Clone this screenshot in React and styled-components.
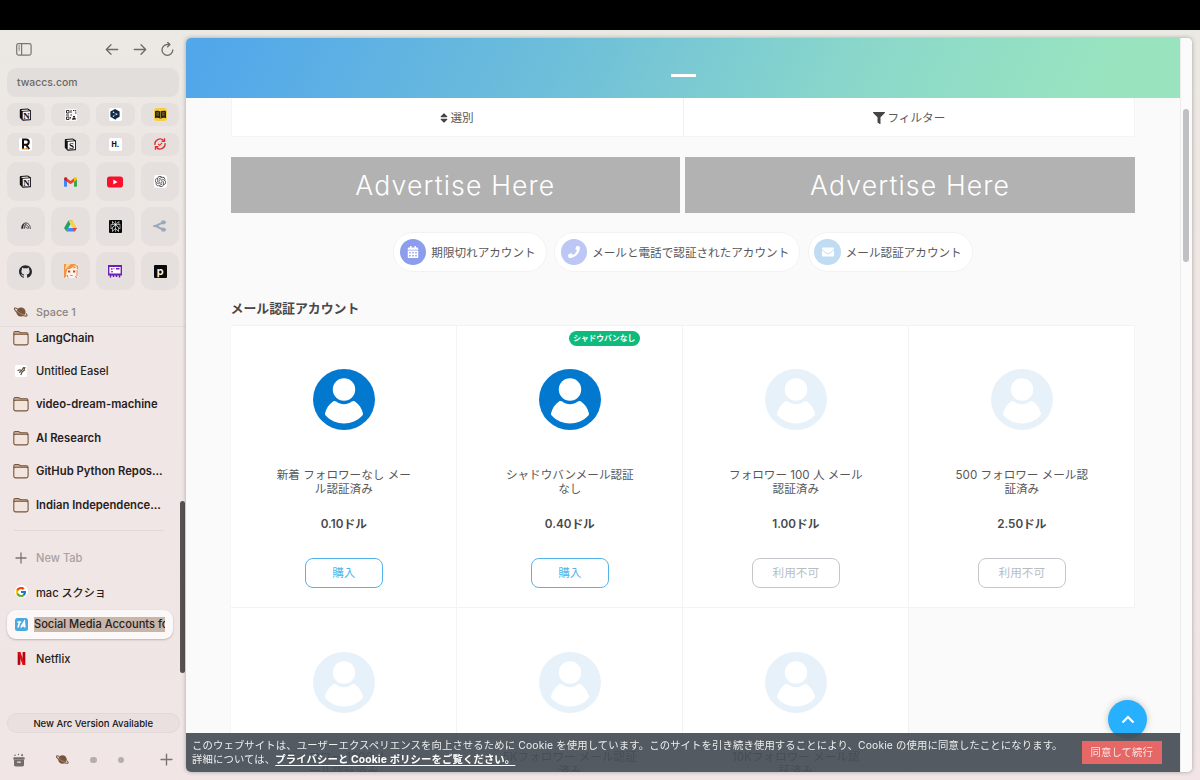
import React from 'react';
import styled, { createGlobalStyle } from 'styled-components';
import { FaSort, FaFilter, FaCalendarAlt, FaPhone, FaEnvelope } from 'react-icons/fa';
import { FcGoogle } from 'react-icons/fc';
import { SiGithub, SiOpenai, SiPerplexity } from 'react-icons/si';

const GlobalStyle = createGlobalStyle`
    * { box-sizing: border-box; }
    body {
        margin: 0;
        overflow: hidden;
        font-family: Inter, "Noto Sans CJK JP", sans-serif;
    }
    svg { display: block; flex: none; }
`

const Screen = styled.div`
    display: flex;
    width: 1200px;
    height: 780px;
    border-top: 30px solid #000;
    background: linear-gradient(180deg, #ebe9e3 0%, #ede7e3 16%, #efe7e5 40%, #f1e5e5 100%);
`

/* sidebar */

const Sidebar = styled.div`
    position: relative;
    display: flex;
    flex-direction: column;
    width: 186px;
    height: 750px;
`

const Toolbar = styled.div`
    display: flex;
    align-items: center;
    height: 37.5px;
    padding: 1px 12px 0 16px;
`

const NavButtons = styled.div`
    display: flex;
    gap: 14px;
    margin-left: auto;
`

const UrlBar = styled.div`
    height: 29.5px;
    margin: 0 7px 6px 6.5px;
    padding-left: 10.5px;
    border-radius: 9px;
    background: #e2dedb;
    color: #6d6865;
    font-size: 10.4px;
    font-weight: 500;
    line-height: 30.5px;
`

const PinGrid = styled.div`
    display: grid;
    grid-template-columns: repeat(4, 38.4px);
    grid-template-rows: 23.3px 23.3px repeat(3, 38.4px);
    gap: 6.4px;
    padding-left: 6.6px;
`

const Pin = styled.div`
    display: flex;
    align-items: center;
    justify-content: center;
    border-radius: ${props => props.$tall ? 10 : 8}px;
    background: #e5e0dd;
`

const Tile = styled.div`
    display: flex;
    align-items: center;
    justify-content: center;
    width: 13px;
    height: 13px;
    border-radius: ${props => props.$radius || 2}px;
    background: ${props => props.$bg || '#fff'};
    color: ${props => props.$color || '#111'};
    font-size: ${props => props.$size || 8}px;
    font-weight: ${props => props.$weight || 800};
    line-height: 13px;
`

const SpaceTitle = styled.div`
    display: flex;
    align-items: center;
    gap: 8px;
    height: 36.5px;
    padding: 8px 0 0 14px;
    border-bottom: 1px solid #e5dddb;
    color: #8b8380;
    font-size: 10.8px;
    font-weight: 500;
`

const TabArea = styled.div`
    overflow: hidden;
    height: 349px;
`

const TabList = styled.div`
    margin-top: -6px;
`

const TabRow = styled.div`
    display: flex;
    align-items: center;
    gap: 7px;
    height: 33.45px;
    padding-left: 14px;
    color: ${props => props.$muted ? '#aaa19f' : '#272120'};
    font-size: ${props => props.$bold ? 11.25 : 11.1}px;
    font-weight: ${props => props.$bold ? 630 : 450};
    white-space: nowrap;
`

const ActiveTab = styled.div`
    display: flex;
    align-items: center;
    gap: 5px;
    height: 29px;
    margin: 2px 13px 2.5px 7px;
    padding-left: 7px;
    border-radius: 9px;
    background: #fbf8f7;
    box-shadow: 0 1px 2px rgba(90, 60, 50, .3);
`

const Selection = styled.span`
    overflow: hidden;
    width: 131px;
    background: #c8b6aa;
    color: #272120;
    font-size: 11.1px;
    font-weight: 450;
    line-height: 15px;
    white-space: nowrap;
`

const IconSlot = styled.span`
    display: flex;
    align-items: center;
    justify-content: center;
    width: 15px;
    margin-right: .5px;
    margin-left: -.5px;
    flex: none;
`

const Separator = styled.div`
    height: 10px;
    margin: 0 22px 10px 14px;
    border-bottom: 1px solid #e2d8d6;
`

const UpdatePill = styled.div`
    height: 20px;
    margin: 37.5px 6px 0 6.5px;
    border: 1px solid #e3d9d8;
    border-radius: 10px;
    background: #eae0df;
    color: #171313;
    font-size: 9.55px;
    font-weight: 550;
    line-height: 19px;
    text-align: center;
`

const SidebarFooter = styled.div`
    display: flex;
    align-items: center;
    justify-content: space-between;
    height: 46px;
    padding: 7px 13px 0 13px;
`

const SpaceDots = styled.div`
    display: flex;
    align-items: center;
    gap: 21px;
    margin-right: 5px;
`

const Dot = styled.div`
    width: 6.5px;
    height: 6.5px;
    border-radius: 50%;
    background: #b7adab;
`

const SidebarThumb = styled.div`
    position: absolute;
    top: 471px;
    right: 1.5px;
    width: 5px;
    height: 172px;
    border-radius: 3px;
    background: #575352;
`

/* page */

const Browser = styled.div`
    position: relative;
    display: flex;
    overflow: hidden;
    width: 1006px;
    height: 734px;
    margin-top: 8px;
    border-radius: 5px;
    background: #fafafa;
`

const Frame = styled.div`
    border-radius: 5px;
    height: 742px;
    filter: drop-shadow(0 0 2px rgba(0, 0, 0, .3));
`

const Page = styled.div`
    width: 993.5px;
    height: 734px;
    overflow: hidden;
`

const Scrollbar = styled.div`
    width: 12.5px;
    padding: 71px 0 0 2px;
    border-left: 1px solid #ececec;
    background: #fbfbfb;
`

const ScrollThumb = styled.div`
    width: 6px;
    height: 153px;
    border-radius: 3px;
    background: #c0c0c2;
`

const Banner = styled.div`
    display: flex;
    justify-content: center;
    height: 60px;
    padding: 36px 0 0 1px;
    background: linear-gradient(115deg, #52a7ea 3%, #6ebfd9 38%, #8bd8ca 68%, #99e4bf 92%);
`

const BannerDash = styled.div`
    width: 25px;
    height: 3px;
    background: #fff;
`

const Content = styled.div`
    width: 904.5px;
    margin: 0 0 0 44.5px;
`

const SortBar = styled.div`
    display: grid;
    grid-template-columns: 1fr 1fr;
    height: 39px;
    border: 1px solid #f4f4f4;
    border-top: 0;
    background: #fff;
`

const SortItem = styled.div`
    display: flex;
    align-items: center;
    justify-content: center;
    gap: ${props => props.$gap}px;
    padding: 2px ${props => props.$divided ? 0 : 3}px 0 0;
    border-left: ${props => props.$divided ? '1px solid #efefef' : '0'};
    color: #58585a;
    font-size: 11.6px;
    line-height: 20px;

    svg { color: #454547; }
`

const Ads = styled.div`
    display: grid;
    grid-template-columns: 1fr 1fr;
    gap: 5px;
    margin-top: 20px;
`

const Ad = styled.div`
    height: 55.5px;
    background: #b2b2b2;
    color: #fff;
    font-size: 26.6px;
    font-weight: 300;
    letter-spacing: 1.15px;
    line-height: 56px;
    text-align: center;
`

const Chips = styled.div`
    display: flex;
    justify-content: center;
    gap: 7.5px;
    margin: 19.5px 0 0 .5px;
`

const Chip = styled.div`
    display: flex;
    align-items: center;
    gap: 5px;
    height: 39.5px;
    padding: 0 10px 0 5.5px;
    border: 1px solid #f2f2f2;
    border-radius: 20px;
    background: #fff;
    color: #58585a;
    font-size: 11.6px;
    white-space: nowrap;
`

const ChipIcon = styled.div`
    display: flex;
    align-items: center;
    justify-content: center;
    width: 26.5px;
    height: 26.5px;
    border-radius: 50%;
    background: ${props => props.$bg};
    color: #fff;
`

const Heading = styled.div`
    height: 20px;
    margin: 27px 0 6px;
    color: #48484b;
    font-size: 12.9px;
    font-weight: 600;
    line-height: 20px;
`

const Products = styled.div`
    display: grid;
    grid-template-columns: repeat(4, 226px);
    grid-auto-rows: 282.5px;
    margin-left: .8px;
    border-top: 1px solid #f3f3f3;
    box-shadow: -1px 0 0 #f6f6f6;
`

const Product = styled.div`
    position: relative;
    display: flex;
    flex-direction: column;
    align-items: center;
    padding-top: 43.5px;
    border-right: 1px solid #f3f3f3;
    border-bottom: 1px solid #f3f3f3;
    background: #fff;
`

const Badge = styled.div`
    position: absolute;
    top: 5px;
    right: 42.5px;
    height: 15px;
    padding: 0 4.7px;
    border-radius: 8px;
    background: #0dbb7c;
    color: #fff;
    font-size: 7.7px;
    font-weight: 700;
    line-height: 15px;
    white-space: nowrap;
`

const ProductName = styled.div`
    height: 28.4px;
    margin-top: 37.5px;
    color: #58585a;
    font-size: 11.6px;
    line-height: 14.2px;
    text-align: center;
    white-space: pre;
`

const Price = styled.div`
    height: 16px;
    margin-top: 20.6px;
    color: #48484b;
    font-size: 11.7px;
    font-weight: 600;
    line-height: 16.6px;
`

const BuyButton = styled.button`
    width: ${props => props.disabled ? 88 : 78}px;
    height: 29.5px;
    margin-top: 26px;
    padding: 1px 0 0;
    border: 1px solid ${props => props.disabled ? '#c3c6ca' : '#53b4ec'};
    border-radius: 8px;
    background: #fff;
    color: ${props => props.disabled ? '#b9bcc1' : '#53b4ec'};
    font-family: inherit;
    font-size: 11.6px;
    line-height: 27px;
`

const ToTop = styled.div`
    position: absolute;
    right: 45px;
    top: 662px;
    display: flex;
    align-items: center;
    justify-content: center;
    width: 39px;
    height: 39px;
    border-radius: 50%;
    background: #27b0fd;
    box-shadow: 0 0 7px rgba(0, 0, 0, .22);
`

const CookieBar = styled.div`
    position: absolute;
    left: 0;
    bottom: 0;
    display: flex;
    align-items: center;
    justify-content: space-between;
    width: 993.5px;
    height: 39px;
    padding: 0 18px 0 6px;
    background: rgba(69, 76, 84, .92);
    color: #eceded;
    font-size: 10.35px;
    letter-spacing: .13px;
    line-height: 13.7px;
    white-space: nowrap;
`

const PolicyLink = styled.a`
    color: #fff;
    font-weight: 700;
    text-decoration: underline;
    text-underline-offset: 2px;
`

const Agree = styled.div`
    width: 79.5px;
    height: 23px;
    background: #e56866;
    color: #fbe3e3;
    line-height: 23px;
    text-align: center;
`

/* icons */

const SidebarIcon = () =>
    <svg width="16" height="13" viewBox="0 0 16 13" fill="none" stroke="#7b7472" strokeWidth="1.2">
        <rect x=".7" y=".7" width="14.4" height="11.4" rx="1.8" />
        <path d="M5.6 .7v11.4M2.5 3.2h1.4M2.5 5.1h1.4M2.5 7h1.4" />
    </svg>

const Arrow = ({flip}) =>
    <svg width="14" height="14" viewBox="0 -1.5 14 14" fill="none" stroke="#6f6967" strokeWidth="1.3" strokeLinecap="round" strokeLinejoin="round">
        <path d={flip ? "M1.3 6h11.4M8 1.3L12.7 6 8 10.7" : "M12.7 6H1.3M6 1.3L1.3 6 6 10.7"} />
    </svg>

const Reload = () =>
    <svg width="13" height="14" viewBox="0 0 13 14" fill="none" stroke="#6f6967" strokeWidth="1.3" strokeLinecap="round" strokeLinejoin="round">
        <path d="M11.8 8a5.4 5.4 0 1 1-5.2-5.5h2M6.6 .3l2.3 2.2-2.3 2.4" />
    </svg>

const NotionCube = ({letter = 'N'}) =>
    <svg width="13" height="13" viewBox="0 0 13 13">
        <path d="M.8 1.9C.8 1.3 1.2 1 1.7 1L8.8.6l3.2 2v8.8c0 .6-.3.9-.9.9l-7.4.4L.8 9.8z" fill="#111" />
        <path d="M2 2l6.5-.5 1.5.9-6.6.5z" fill="#f1efed" />
        <path d="M3.7 3.7l7.4-.4v7.9l-7.4.4z" fill="#f7f5f3" />
        <text x="7.4" y="10.5" textAnchor="middle" fontFamily="Liberation Serif" fontSize="9" fontWeight="700" fill="#111">{letter}</text>
    </svg>

const QrTile = () =>
    <svg width="12" height="12" viewBox="0 0 12 12">
        <rect width="12" height="12" rx="1.5" fill="#faf9f8" />
        <g fill="none" stroke="#333" strokeWidth="1">
            <path d="M1.5 1.5h2.5v2.5H1.5zM1.5 8h2.5v2.5H1.5z" />
            <path d="M6 1v3M8 1.5h1.5M10 4h1.5M1 6h3M5.5 6H7M10.7 1v1.5M5.5 8v1.5" />
        </g>
        <path d="M7 10.8c0-3 3.6-3.6 4-.4zM8 7h2v1H8z" fill="#222" />
    </svg>

const Hexagon = () =>
    <svg width="10" height="11" viewBox="0 0 10 11">
        <path d="M5 0l4.6 2.5v5.3L5.6 10l.4 1-2.2-1.2L.4 7.8V2.5z" fill="#0f2b46" />
        <path d="M3.4 3.3l3.2 1.9-3.2 1.9" fill="none" stroke="#9db5cd" strokeWidth=".6" />
        <g fill="#fff">
            <circle cx="3.4" cy="3.3" r=".7" />
            <circle cx="6.7" cy="5.2" r=".7" />
            <circle cx="3.4" cy="7.1" r=".7" />
        </g>
    </svg>

const Book = () =>
    <svg width="13" height="13" viewBox="0 0 13 13">
        <rect width="13" height="13" rx="3" fill="#f7cf3d" />
        <path d="M1 3.2c2-.8 4-.6 5.5.3 1.5-.9 3.5-1.1 5.5-.3v7c-2-.6-4-.4-5.5.5-1.5-.9-3.5-1.1-5.5-.5z" fill="#222" />
        <path d="M6.5 3.5v7M2.3 4.8l2.7.3M2.3 6.8l2.7.3M8 5.1l2.7-.3M8 7.1l2.7-.3" stroke="#c9a530" strokeWidth=".7" />
    </svg>

const RMark = () =>
    <svg width="10" height="12" viewBox="0 0 10 12">
        <path d="M2 11V1.5h3.2a2.6 2.6 0 0 1 0 5.2H2M5 6.7L8.2 11" fill="none" stroke="#111" strokeWidth="2" />
        <path d="M1 10.5h3.5L6 9l2 2.5H1z" fill="#f08a24" />
    </svg>

const SyncCheck = () =>
    <svg width="12" height="12" viewBox="0 0 12 12" fill="none" stroke="#e33030" strokeWidth="1.4">
        <path d="M1 6.8a5 5 0 0 1 8.6-4.2M11 5.2a5 5 0 0 1-8.6 4.2" />
        <path d="M10.5 .3v3H7.6M1.5 11.7v-3h2.9" />
        <path d="M4.2 6l1.4 1.3 2.5-2.5" strokeWidth="1.1" />
    </svg>

const Gmail = () =>
    <svg width="13" height="10" viewBox="0 0 13 10">
        <path d="M0 2v6.7c0 .6.5 1 1 1h2V4.2z" fill="#4285f4" />
        <path d="M13 2v6.7c0 .6-.5 1-1 1h-2V4.2z" fill="#34a853" />
        <path d="M3 1.2l3.5 2.7L10 1.2v3.5L6.5 7.3 3 4.7z" fill="#ea4335" />
        <path d="M0 2C0 .5 1.7-.3 3 .8v3.9L0 2.5z" fill="#c5221f" />
        <path d="M13 2c0-1.5-1.7-2.3-3-1.2v3.9l3-2.2z" fill="#fbbc04" />
    </svg>

const Youtube = () =>
    <svg width="16" height="12" viewBox="0 0 16 12">
        <rect y=".5" width="16" height="11" rx="2.8" fill="#f9102a" />
        <path d="M6.3 3.6v4.8L10.5 6z" fill="#fff" />
    </svg>

const Arches = () =>
    <svg width="10" height="8" viewBox="0 0 10 8">
        <path d="M.3 6.8C.3 3.3 2 .8 4.6.8c-1.7 1.3-2.4 3.2-2.5 6z" fill="#2a2727" />
        <path d="M4 .9c3.3-.2 5.3 2.3 5.4 5.9M4 3c2-.6 3.7 1 3.9 3.8M4 5c1.3-.3 2.1.4 2.3 1.8M3.3 6.8c0-3 .6-4.4 2-5.2" fill="none" stroke="#4a4646" strokeWidth=".95" />
    </svg>

const Drive = () =>
    <svg width="13" height="12" viewBox="0 0 13 12">
        <path d="M4.4 .5h4.2L6.5 4.2 2.3 11.3.1 7.9z" fill="#1da462" />
        <path d="M4.4 .5h4.2l4.3 7.4H8.7z" fill="#ffcf48" />
        <path d="M4.3 7.9h8.6l-2.2 3.5H2.3z" fill="#4687f4" />
        <path d="M8.7 7.9h4.2l-2.2 3.5z" fill="#ea4335" />
    </svg>

const Branch = () =>
    <svg width="14" height="12" viewBox="0 0 14 12" fill="none" stroke="#9aa8bb" strokeWidth="2">
        <path d="M.3 6h2.5L9.5 2.7M2.8 6l6.7 3.3" />
        <path d="M8.6 .4h3l1.8 1.9-1.8 1.9H8.2zM8.6 11.6h3l1.8-1.9-1.8-1.9H8.2z" fill="#9aa8bb" stroke="none" />
    </svg>

const Anime = () =>
    <svg width="14" height="14" viewBox="0 0 14 14">
        <rect width="14" height="14" rx="1.5" fill="#fdf3ec" />
        <path d="M0 0h11l3 2v4l-2-2.5-3 1.2 1-2.2-4 2.5L3.5 5 2.5 8 2 13 0 14z" fill="#f0924a" />
        <path d="M2 0h5L1 6zM9 1l4 1v3z" fill="#fbd38d" />
        <path d="M4 7.5h2.2M9 7.5h2.2" stroke="#c74a22" strokeWidth="1.8" />
        <path d="M6.3 11.5h2.4M13 6v6" stroke="#e8622f" strokeWidth=".8" />
        <path d="M3 11l1 2.5M11 12.5l2 1" stroke="#e8622f" />
    </svg>

const Board = () =>
    <svg width="14" height="13" viewBox="0 0 14 13">
        <path d="M.5 1h13v8.5h-13z" fill="#fff" stroke="#6b21b5" strokeWidth="1.8" />
        <path d="M2.5 10v2.5M5.5 10v2M8.5 10v2M11.5 10v2.5" stroke="#6b21b5" strokeWidth="1.5" />
        <path d="M3 3.2h1.5v1.5H3zM5.5 3.2h1v1h-1zM8 3h3.5v1.5H8zM3 6.2h2v1H3z" fill="#6b21b5" />
    </svg>

const Planet = ({size = 13}) =>
    <svg width={size} height={size} viewBox="0 0 14 14">
        <circle cx="7" cy="7" r="4.6" fill="#79553b" />
        <path d="M3.5 3.8C1 2.5-.2 3 .7 4.7c1.3 2.3 6.6 5.5 10.2 6.3 2.5.5 2.8-.8 1-2.6" fill="none" stroke="#79553b" strokeWidth="1.1" />
        <path d="M2.5 5.6c2 2 5 3.8 8.2 4.6" fill="none" stroke="#efe6e4" strokeWidth=".4" />
    </svg>

const Folder = () =>
    <svg width="16" height="16" viewBox="0 0 16 16" fill="none" stroke="#79553b" strokeWidth="1.1">
        <path d="M.8 4.8V3c0-.9.6-1.5 1.5-1.5h3c1.2 0 1.5 1.2 2.7 1.2h5.5c.9 0 1.5.6 1.5 1.5v.6z" fill="#c7ad9d" />
        <rect x=".8" y="4.3" width="14.3" height="10.6" rx="1.8" fill="#f1e5dd" />
    </svg>

const Plus = ({size}) =>
    <svg width={size} height={size} viewBox="0 0 12 12" stroke="#7c7472" strokeWidth="1.3" strokeLinecap="round">
        <path d="M6 1v10M1 6h10" />
    </svg>

const Easel = () =>
    <svg width="12" height="12" viewBox="0 0 12 12">
        <rect width="12" height="12" rx="1.5" fill="#fff" />
        <path d="M2.5 5.5L5 4.8l1.5 1L8.5 2.5l1.5.3-1 1.2.5 1L7 7.2 5.8 10M4 7.5l2-1" fill="none" stroke="#5a4638" strokeWidth="1.1" />
    </svg>

const GoogleTab = () =>
    <Tile $radius={7}><FcGoogle size={12} /></Tile>

const SiteLogo = () =>
    <svg width="13" height="13" viewBox="0 0 13 13">
        <rect width="13" height="13" rx="2.5" fill="#4aa9e0" />
        <path d="M2.3 4H6.2M4.7 4L3 9.5M5.8 9.5L9.3 3.8l.5 5.7M7 8h2.7" fill="none" stroke="#fff" strokeWidth="1.6" />
    </svg>

const Netflix = () =>
    <svg width="9" height="13" viewBox="0 0 9 13">
        <path d="M.7 0h2.7v12.7L.7 13zM5.6 0h2.7v13l-2.7-.3z" fill="#b1060f" />
        <path d="M.7 0h2.7l4.9 13-2.7-.3z" fill="#e50914" />
    </svg>

const Archive = () =>
    <svg width="12" height="14" viewBox="0 0 12 14" fill="#746c6a">
        <rect x=".3" y="4.3" width="11.4" height="2.5" rx=".8" />
        <path d="M1 7.1h10v4.7c0 1-.7 1.7-1.7 1.7H2.7c-1 0-1.7-.7-1.7-1.7z" />
        <rect x="4" y="8.6" width="4" height="1.2" rx=".6" fill="#efe4e3" />
        <circle cx="2" cy="2.2" r=".8" />
        <circle cx="5.5" cy="1.5" r=".7" />
        <path d="M8 2.2l1.1-1.8 1.1 1.8-1.1 1.2z" />
    </svg>

const Avatar = ({faded}) =>
    <svg width="62" height="61" viewBox="0 0 62 61">
        <ellipse cx="31" cy="30.5" rx="31" ry="30.5" fill={faded ? '#e7f1fa' : '#0278cf'} />
        <path d="M20.3 32.2c1-.6 2.2-.2 3 .4 4.6 3.5 10.8 3.5 15.4 0 .8-.6 2-1 3-.4 4.2 3 7.3 7.2 8.3 12.3.1.8-.1 1.4-.6 2-9.5 10.5-27.3 10.5-36.8 0-.5-.6-.7-1.2-.6-2 1-5.1 4.1-9.3 8.3-12.3z" fill="#fff" />
        <circle cx="31" cy="20.5" r="12.8" fill={faded ? '#e7f1fa' : '#0278cf'} />
        <circle cx="31" cy="20.5" r="11.2" fill="#fff" />
    </svg>

const pins = [
    <NotionCube />,
    <QrTile />,
    <Tile><Hexagon /></Tile>,
    <Book />,
    <Tile><RMark /></Tile>,
    <NotionCube letter="S" />,
    <Tile $size={7}>H.</Tile>,
    <SyncCheck />,
    <NotionCube />,
    <Gmail />,
    <Youtube />,
    <Tile $radius={3} $color="#444"><SiOpenai size={11} /></Tile>,
    <Arches />,
    <Drive />,
    <Tile $bg="#0a0a0a" $color="#fff" $radius={1}><SiPerplexity size={11} /></Tile>,
    <Branch />,
    <SiGithub size={13} color="#24292e" />,
    <Anime />,
    <Board />,
    <Tile $bg="#0a0a0a" $color="#fff" $radius={1} $size={11} $weight={600}>p</Tile>,
];

const products = [
    {name: '新着 フォロワーなし メー\nル認証済み', price: '0.10ドル', available: true},
    {name: 'シャドウバンメール認証\nなし', price: '0.40ドル', available: true, badge: 'シャドウバンなし'},
    {name: 'フォロワー 100 人 メール\n認証済み', price: '1.00ドル'},
    {name: '500 フォロワー メール認\n証済み', price: '2.50ドル'},
    {name: 'フォロワー 1000 人 メ\nール認証済み', price: '5.00ドル'},
    {name: '5Kフォロワー メール認証\n済み', price: '15.00ドル'},
    {name: '10Kフォロワー メール認\n証済み', price: '25.00ドル'},
];

const Tab = ({icon, label, bold, muted}) =>
    <TabRow $bold={bold} $muted={muted}>
        <IconSlot>{icon}</IconSlot>
        {label}
    </TabRow>;

const LeftPanel = () =>
    <Sidebar>
        <Toolbar>
            <SidebarIcon />
            <NavButtons>
                <Arrow />
                <Arrow flip />
                <Reload />
            </NavButtons>
        </Toolbar>
        <UrlBar>twaccs.com</UrlBar>
        <PinGrid>
            {pins.map((icon, i) => <Pin key={i} $tall={i > 7}>{icon}</Pin>)}
        </PinGrid>
        <SpaceTitle><Planet size={14} />Space 1</SpaceTitle>
        <TabArea>
            <TabList>
                <Tab bold icon={<Folder />} label="LangChain" />
                <Tab icon={<Easel />} label="Untitled Easel" />
                <Tab bold icon={<Folder />} label="video-dream-machine" />
                <Tab bold icon={<Folder />} label="AI Research" />
                <Tab bold icon={<Folder />} label="GitHub Python Repos..." />
                <Tab bold icon={<Folder />} label="Indian Independence..." />
                <Separator />
                <Tab muted icon={<Plus size={12} />} label="New Tab" />
                <Tab icon={<GoogleTab />} label="mac スクショ" />
                <ActiveTab>
                    <IconSlot><SiteLogo /></IconSlot>
                    <Selection>Social Media Accounts for Sale</Selection>
                </ActiveTab>
                <Tab icon={<Netflix />} label="Netflix" />
            </TabList>
        </TabArea>
        <UpdatePill>New Arc Version Available</UpdatePill>
        <SidebarFooter>
            <Archive />
            <SpaceDots>
                <Planet />
                <Dot />
                <Dot />
            </SpaceDots>
            <Plus size={13} />
        </SidebarFooter>
        <SidebarThumb />
    </Sidebar>;

const ProductCard = ({name, price, available, badge}) =>
    <Product>
        {badge && <Badge>{badge}</Badge>}
        <Avatar faded={!available} />
        <ProductName>{name}</ProductName>
        <Price>{price}</Price>
        <BuyButton disabled={!available}>{available ? '購入' : '利用不可'}</BuyButton>
    </Product>;

const App = () =>
    <Screen>
        <GlobalStyle />
        <LeftPanel />
        <Frame>
            <Browser>
                <Page>
                    <Banner><BannerDash /></Banner>
                    <Content>
                        <SortBar>
                            <SortItem $gap={1}><FaSort size={12} />選別</SortItem>
                            <SortItem $gap={3} $divided><FaFilter size={12} />フィルター</SortItem>
                        </SortBar>
                        <Ads>
                            <Ad>Advertise Here</Ad>
                            <Ad>Advertise Here</Ad>
                        </Ads>
                        <Chips>
                            <Chip><ChipIcon $bg="#8b9dec"><FaCalendarAlt size={12} /></ChipIcon>期限切れアカウント</Chip>
                            <Chip><ChipIcon $bg="#bcc7f6"><FaPhone size={12} /></ChipIcon>メールと電話で認証されたアカウント</Chip>
                            <Chip><ChipIcon $bg="#bfdcf2"><FaEnvelope size={12} /></ChipIcon>メール認証アカウント</Chip>
                        </Chips>
                        <Heading>メール認証アカウント</Heading>
                        <Products>
                            {products.map((p, i) => <ProductCard key={i} {...p} />)}
                        </Products>
                    </Content>
                </Page>
                <Scrollbar><ScrollThumb /></Scrollbar>
                <ToTop>
                    <svg width="14" height="9" viewBox="0 0 14 9" fill="none" stroke="#fff" strokeWidth="2.2">
                        <path d="M1.5 7.5L7 2l5.5 5.5" />
                    </svg>
                </ToTop>
                <CookieBar>
                    <div>
                        このウェブサイトは、ユーザーエクスペリエンスを向上させるために Cookie を使用しています。このサイトを引き続き使用することにより、Cookie の使用に同意したことになります。<br />
                        詳細については、<PolicyLink>プライバシーと Cookie ポリシーをご覧ください。</PolicyLink>
                    </div>
                    <Agree>同意して続行</Agree>
                </CookieBar>
            </Browser>
        </Frame>
    </Screen>;

export default App;
